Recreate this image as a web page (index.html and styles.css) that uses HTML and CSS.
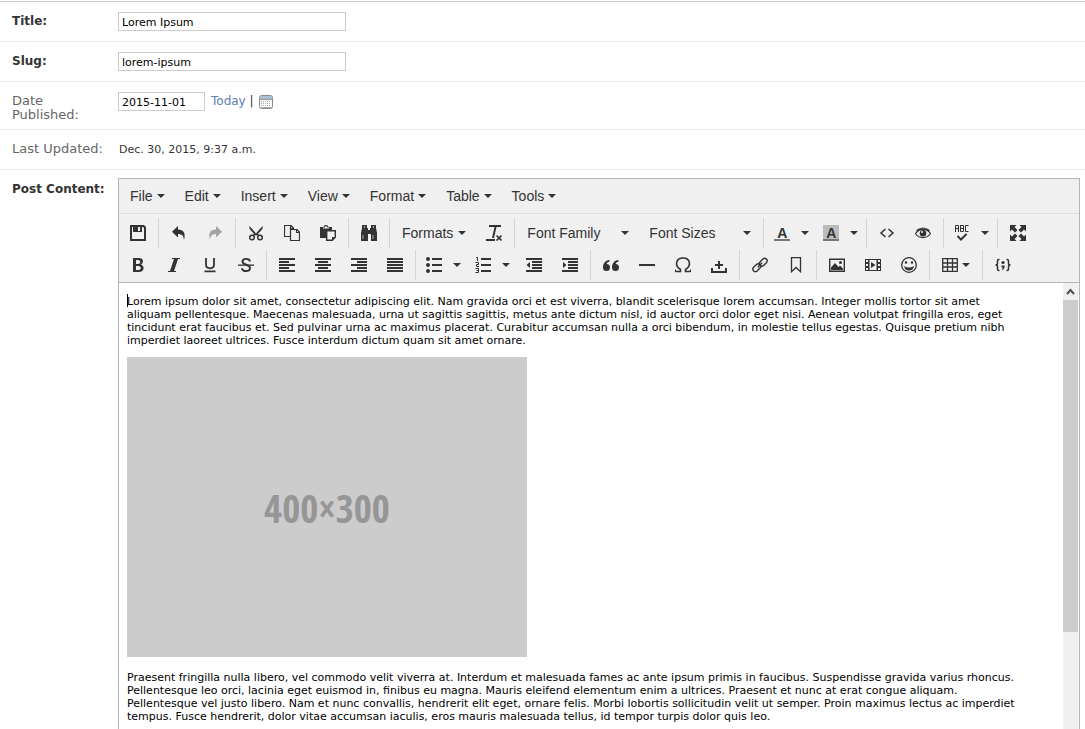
FILE: index.html
```html
<!DOCTYPE html>
<html lang="en">
<head>
<meta charset="utf-8">
<title>Change post</title>
<link rel="stylesheet" href="styles.css">
</head>
<body>
<form class="post-form">
  <div class="row">
    <label class="label required" for="title">Title:</label>
    <input class="text-input wide" id="title" type="text" value="Lorem Ipsum">
  </div>
  <div class="row">
    <label class="label required" for="slug">Slug:</label>
    <input class="text-input wide" id="slug" type="text" value="lorem-ipsum">
  </div>
  <div class="row">
    <label class="label" for="date">Date Published:</label>
    <div class="date-field">
      <input class="text-input date" id="date" type="text" value="2015-11-01">
      <span class="shortcuts"><a href="#today">Today</a> |</span>
      <a class="calendar" href="#calendar" aria-label="Choose a date">
        <svg width="14" height="14" viewBox="0 0 14 14"><rect x=".5" y=".5" width="13" height="13" rx="2" fill="#fff" stroke="#8a8a8a"/><path d="M1 1h12v3H1z" fill="#a9bfd1"/><path d="M1 4.5h12" stroke="#999"/><path d="M2 6.5h10M2 8.5h10M2 10.5h10" stroke="#aaa" stroke-dasharray="1 1"/><path d="M1 12.5h12" stroke="#aaa"/></svg>
      </a>
    </div>
  </div>
  <div class="row">
    <span class="label">Last Updated:</span>
    <p class="readonly">Dec. 30, 2015, 9:37 a.m.</p>
  </div>
  <div class="row editor-row">
    <span class="label required" id="content-label">Post Content:</span>
    <div class="editor">
      <div class="menubar">
        <button type="button">File<i class="caret"></i></button>
        <button type="button">Edit<i class="caret"></i></button>
        <button type="button">Insert<i class="caret"></i></button>
        <button type="button">View<i class="caret"></i></button>
        <button type="button">Format<i class="caret"></i></button>
        <button type="button">Table<i class="caret"></i></button>
        <button type="button">Tools<i class="caret"></i></button>
      </div>
      <div class="toolbars">
        <div class="toolbar">
          <div class="group">
            <button type="button" class="tool" aria-label="Save"><svg class="icon" viewBox="0 0 16 16"><path fill-rule="evenodd" d="M0 0h14l2 2v14H0zM2 2v12h12V3l-1-1h-1v5H3V2zM8 2v4h2V2z"/></svg></button>
          </div>
          <div class="group">
            <button type="button" class="tool" aria-label="Undo"><svg class="icon" viewBox="0 0 16 16"><path d="M7 1v3.500C12.500 4.500 15 8 13 15c-.2-4-2-6-6-6v3.500L1 6.700z"/></svg></button>
            <button type="button" class="tool off" aria-label="Redo"><svg class="icon" viewBox="0 0 16 16"><path d="M9 1v3.500C3.500 4.500 1 8 3 15c.2-4 2-6 6-6v3.500l6-5.800z"/></svg></button>
          </div>
          <div class="group">
            <button type="button" class="tool" aria-label="Cut"><svg class="icon" viewBox="0 0 16 16"><path d="M1.500 1 9 9.500l-1.500 1L2 4.500Q1 3 1.500 1zM14.500 1 7 9.500l1.500 1L14 4.500Q15 3 14.500 1z"/><g fill="none" stroke="currentColor" stroke-width="1.500"><circle cx="4" cy="12.500" r="2.300"/><circle cx="12" cy="12.500" r="2.300"/><path d="M5 10.500q3-2.500 6 0"/></g></svg></button>
            <button type="button" class="tool" aria-label="Copy"><svg class="icon" viewBox="0 0 16 16"><g fill="none" stroke="currentColor" stroke-width="1.200"><path d="M6.500 11.500h-6V.5H7L9.500 3v1.500M6.500.5v3h3"/><path d="M6.500 4.500H13L15.500 7v8.500h-9zM12.500 4.500v3h3"/></g></svg></button>
            <button type="button" class="tool" aria-label="Paste"><svg class="icon" viewBox="0 0 16 16"><path fill-rule="evenodd" d="M0 2h3.500C4 .5 5 0 6 0s2 .5 2.500 2H12v4H6v7H0zM3 3.500h6V2.500H7.300a1.300 1.300 0 0 0-2.600 0H3z"/><path d="M6.700 5.700h8.600v6.600l-3 3H6.700z" fill="#f0f0f0" stroke="currentColor" stroke-width="1.400"/><path d="M15 12h-3v3z"/></svg></button>
          </div>
          <div class="group">
            <button type="button" class="tool" aria-label="Find and replace"><svg class="icon" viewBox="0 0 16 16"><path d="M1 0h5v3h1v2h2V3h1V0h5v3l1 5v8h-6V9H7v7H0V8l1-5z"/><path d="M3.500 1v2M12.500 1v2M2 10v4M12 10v4" stroke="#aaa"/></svg></button>
          </div>
          <div class="group">
            <button type="button" class="text-tool">Formats<i class="caret"></i></button>
            <button type="button" class="tool" aria-label="Clear formatting"><svg class="icon" viewBox="0 0 16 16"><path d="M3 0h12v2h-4.500L8 13H6L8.500 2H3zM0 14h9v2H0z"/><path d="m10.500 10.500 5 5m0-5-5 5" stroke="currentColor" stroke-width="1.600"/></svg></button>
          </div>
          <div class="group">
            <span class="drop"><select aria-label="Font Family"><option>Font Family</option></select><i class="caret"></i></span>
            <span class="drop"><select aria-label="Font Sizes"><option>Font Sizes</option></select><i class="caret"></i></span>
          </div>
          <div class="group">
            <button type="button" class="split" aria-label="Text color"><span class="swatch">A</span><i class="caret"></i></button>
            <button type="button" class="split" aria-label="Background color"><span class="swatch filled">A</span><i class="caret"></i></button>
          </div>
          <div class="group">
            <button type="button" class="tool" aria-label="Source code"><svg class="icon" viewBox="0 0 16 16"><path d="M6.500 4 2 8l4.500 4M9.500 4 14 8l-4.500 4" fill="none" stroke="currentColor" stroke-width="1.500"/></svg></button>
            <button type="button" class="tool" aria-label="Preview"><svg class="icon" viewBox="0 0 16 16"><path d="M.5 8.500C4 3 12 3 15.500 8.500 12 14 4 14 .5 8.500zM1.500 5.500Q8 .5 14.500 5.500" fill="none" stroke="currentColor" stroke-width="1.200"/><circle cx="8" cy="8.300" r="3.300"/><circle cx="7" cy="7" r="1" fill="#f0f0f0"/></svg></button>
          </div>
          <div class="group">
            <button type="button" class="split" aria-label="Spellcheck"><svg class="icon" viewBox="0 0 16 16"><path d="M1.500 7V.5h3V7M1.500 3.500h3M6.500 0v6.500h3V.5h-3M6.500 3.500h3M14.500.5h-3v6h3" fill="none" stroke="currentColor"/><path d="m3.500 11 3.500 3.500L12.500 9" fill="none" stroke="currentColor" stroke-width="2"/></svg><i class="caret"></i></button>
          </div>
          <div class="group">
            <button type="button" class="tool" aria-label="Fullscreen"><svg class="icon" viewBox="0 0 16 16"><path d="M0 0h6.500L4.500 2l3 3L5 7.500l-3-3-2 2zM16 0H9.500l2 2-3 3L11 7.500l3-3 2 2zM0 16h6.500l-2-2 3-3L5 8.500l-3 3-2-2zM16 16H9.500l2-2-3-3L11 8.500l3 3 2-2z"/></svg></button>
          </div>
        </div>
        <div class="toolbar">
          <div class="group">
            <button type="button" class="tool" aria-label="Bold"><svg class="icon" viewBox="0 0 16 16"><path fill-rule="evenodd" d="M3 1h6c5 0 5 5 2 6.500 4 1.500 3.500 7.500-2 7.500H3zM6 3v4h2c3 0 3-4 0-4zM6 9v4h2.500c3 0 3-4 0-4z"/></svg></button>
            <button type="button" class="tool" aria-label="Italic"><svg class="icon" viewBox="0 0 16 16"><path d="M6 1h8v1h-2L8 14h2v1H2v-1h2L8 2H6z"/></svg></button>
            <button type="button" class="tool" aria-label="Underline"><svg class="icon" viewBox="0 0 16 16"><path d="M4 1v6.500c0 5 8 5 8 0V1M2.500 14.300h11" fill="none" stroke="currentColor" stroke-width="1.800"/></svg></button>
            <button type="button" class="tool" aria-label="Strikethrough"><svg class="icon" viewBox="0 0 16 16"><path d="M12 4.500C11.500 1 4.500 1 4.500 4.500c0 4 7.500 2.500 7.500 6.500 0 4-8 4-8 .2" fill="none" stroke="currentColor" stroke-width="1.900"/><path d="M0 7.500h16v1.300H0z"/></svg></button>
          </div>
          <div class="group">
            <button type="button" class="tool" aria-label="Align left"><svg class="icon" viewBox="0 0 16 16"><path d="M0 1h16v2H0zM0 4h10v2H0zM0 7h16v2H0zM0 10h10v2H0zM0 13h16v2H0z"/></svg></button>
            <button type="button" class="tool" aria-label="Align center"><svg class="icon" viewBox="0 0 16 16"><path d="M0 1h16v2H0zM3 4h10v2H3zM0 7h16v2H0zM3 10h10v2H3zM0 13h16v2H0z"/></svg></button>
            <button type="button" class="tool" aria-label="Align right"><svg class="icon" viewBox="0 0 16 16"><path d="M0 1h16v2H0zM6 4h10v2H6zM0 7h16v2H0zM6 10h10v2H6zM0 13h16v2H0z"/></svg></button>
            <button type="button" class="tool" aria-label="Justify"><svg class="icon" viewBox="0 0 16 16"><path d="M0 1h16v2H0zM0 4h16v2H0zM0 7h16v2H0zM0 10h16v2H0zM0 13h16v2H0z"/></svg></button>
          </div>
          <div class="group">
            <button type="button" class="split" aria-label="Bullet list"><svg class="icon" viewBox="0 0 16 16"><circle cx="2" cy="2" r="2"/><circle cx="2" cy="8" r="2"/><circle cx="2" cy="14" r="2"/><path d="M6 1h10v2H6zM6 7h10v2H6zM6 13h10v2H6z"/></svg><i class="caret"></i></button>
            <button type="button" class="split" aria-label="Numbered list"><svg class="icon" viewBox="0 0 16 16"><path d="M6 1h10v2H6zM6 7h10v2H6zM6 13h10v2H6z"/><path d="M1 .5h1.500V4M.5 5.500h3v2h-2v2h2.500M.5 11.500h3v4h-3M1.500 13.500h2" fill="none" stroke="currentColor"/></svg><i class="caret"></i></button>
            <button type="button" class="tool" aria-label="Decrease indent"><svg class="icon" viewBox="0 0 16 16"><path d="M0 1h16v2H0zM6 4h10v2H6zM6 7h10v2H6zM6 10h10v2H6zM0 13h16v2H0zM4 5v6L0.500 8z"/></svg></button>
            <button type="button" class="tool" aria-label="Increase indent"><svg class="icon" viewBox="0 0 16 16"><path d="M0 1h16v2H0zM6 4h10v2H6zM6 7h10v2H6zM6 10h10v2H6zM0 13h16v2H0zM1 5v6l3.500-3z"/></svg></button>
          </div>
          <div class="group">
            <button type="button" class="tool" aria-label="Blockquote"><svg class="icon" viewBox="0 0 16 16"><path d="M3.500 7a3.500 3.500 0 1 1-3.500 3.500C0 6.500 2 3.500 6.500 3v1.500Q4 5 3.500 7z"/><path d="M12.500 7a3.500 3.500 0 1 1-3.500 3.500c0-4 2-7 6.500-7.500v1.500Q13 5 12.500 7z"/></svg></button>
            <button type="button" class="tool" aria-label="Horizontal line"><svg class="icon" viewBox="0 0 16 16"><path d="M0 7h16v2H0z"/></svg></button>
            <button type="button" class="tool" aria-label="Special character"><svg class="icon" viewBox="0 0 16 16"><path d="M.5 14.500h5v-2C-.5 9 .5 1 8 1s8.500 8 2.500 11.500v2h5" fill="none" stroke="currentColor" stroke-width="1.600"/><path d="M0 12.500h1V15H0zM15 12.500h1V15h-1z"/></svg></button>
            <button type="button" class="tool" aria-label="Nonbreaking space"><svg class="icon" viewBox="0 0 16 16"><path d="M7 4h2v3h3v2H9v3H7V9H4V7h3zM0 11h2v3h12v-3h2v5H0z"/></svg></button>
          </div>
          <div class="group">
            <button type="button" class="tool" aria-label="Insert link"><svg class="icon" viewBox="0 0 16 16"><g fill="none" stroke="currentColor" stroke-width="1.400"><rect x="6.700" y="2.800" width="9" height="5" rx="2.500" transform="rotate(-45 11.200 5.300)"/><rect x=".3" y="8.200" width="9" height="5" rx="2.500" transform="rotate(-45 4.800 10.700)"/><path d="m5.800 10.200 4.400-4.400"/></g></svg></button>
            <button type="button" class="tool" aria-label="Anchor"><svg class="icon" viewBox="0 0 16 16"><path d="M3.500.7h9v14L8 10.500l-4.500 4.200z" fill="none" stroke="currentColor" stroke-width="1.300"/></svg></button>
          </div>
          <div class="group">
            <button type="button" class="tool" aria-label="Insert image"><svg class="icon" viewBox="0 0 16 16"><path d="M.7 2.200h14.600v12.100H.7z" fill="none" stroke="currentColor" stroke-width="1.400"/><path d="M2 13V10.500L6 6l3.500 4L11 8.500l3 3V13z"/><circle cx="11.500" cy="5.500" r="1.500"/></svg></button>
            <button type="button" class="tool" aria-label="Insert video"><svg class="icon" viewBox="0 0 16 16"><path fill-rule="evenodd" d="M0 2h16v12H0zM4.500 3v10h7V3zM1 3v2h2V3zm0 4v2h2V7zm0 4v2h2v-2zM13 3v2h2V3zm0 4v2h2V7zm0 4v2h2v-2z"/><path d="M6 5v6l4.500-3z"/></svg></button>
            <button type="button" class="tool" aria-label="Emoticons"><svg class="icon" viewBox="0 0 16 16"><circle cx="8" cy="8" r="7.300" fill="none" stroke="currentColor" stroke-width="1.300"/><circle cx="5" cy="5.500" r="1.200"/><circle cx="11" cy="5.500" r="1.200"/><path d="M3 9q5 3 10 0-1 4.500-5 4.500T3 9z"/></svg></button>
          </div>
          <div class="group">
            <button type="button" class="table-tool" aria-label="Table"><svg class="icon" viewBox="0 0 16 16"><path d="M.7 1.700h14.600v12.600H.7zM.7 6h14.600M.7 10h14.600M5.500 2v12M10.500 2v12" fill="none" stroke="currentColor" stroke-width="1.300"/></svg><i class="caret"></i></button>
          </div>
          <div class="group">
            <button type="button" class="tool" aria-label="Insert template"><svg class="icon" viewBox="0 0 16 16"><path d="M4.500 2.500h-.7Q2.500 2.500 2.500 4v2.500Q2.500 8 .5 8q2 0 2 1.500V12q0 1.500 1.300 1.500h.7M11.500 2.500h.7q1.300 0 1.300 1.500v2.500q0 1.500 2 1.500-2 0-2 1.500V12q0 1.500-1.300 1.500h-.7" fill="none" stroke="currentColor" stroke-width="1.500"/><circle cx="8" cy="5.500" r="1.600"/><path d="M6.400 8.500h3.200c.3 2.500-.6 4-2.600 4.500v-1.200q1.200-.5 1-1.300H6.400z"/></svg></button>
          </div>
        </div>
      </div>
      <div class="edit-area">
        <div class="document" contenteditable="true" role="textbox" aria-multiline="true" aria-labelledby="content-label" spellcheck="false">
          <p><span class="cursor"></span>Lorem ipsum dolor sit amet, consectetur adipiscing elit. Nam gravida orci et est viverra, blandit scelerisque lorem accumsan. Integer mollis tortor sit amet<br>aliquam pellentesque. Maecenas malesuada, urna ut sagittis sagittis, metus ante dictum nisl, id auctor orci dolor eget nisi. Aenean volutpat fringilla eros, eget<br>tincidunt erat faucibus et. Sed pulvinar urna ac maximus placerat. Curabitur accumsan nulla a orci bibendum, in molestie tellus egestas. Quisque pretium nibh<br>imperdiet laoreet ultrices. Fusce interdum dictum quam sit amet ornare.</p>
          <div class="placeholder">400×300</div>
          <p>Praesent fringilla nulla libero, vel commodo velit viverra at. Interdum et malesuada fames ac ante ipsum primis in faucibus. Suspendisse gravida varius rhoncus.<br>Pellentesque leo orci, lacinia eget euismod in, finibus eu magna. Mauris eleifend elementum enim a ultrices. Praesent et nunc at erat congue aliquam.<br>Pellentesque vel justo libero. Nam et nunc convallis, hendrerit elit eget, ornare felis. Morbi lobortis sollicitudin velit ut semper. Proin maximus lectus ac imperdiet<br>tempus. Fusce hendrerit, dolor vitae accumsan iaculis, eros mauris malesuada tellus, id tempor turpis dolor quis leo.</p>
        </div>
        <div class="scrollbar">
          <svg class="scroll-up" width="15" height="17" viewBox="0 0 15 17"><path d="m4 11 3.500-4 3.500 4" fill="none" stroke="#505050" stroke-width="2"/></svg>
          <div class="thumb"></div>
        </div>
      </div>
    </div>
  </div>
</form>
</body>
</html>
```
FILE: styles.css
```css
* { box-sizing: border-box; }
body {
  margin: 0;
  background: #fff;
  color: #333;
  font: 11px/13px Verdana, "DejaVu Sans", sans-serif;
}
.post-form {
  display: flex;
  flex-direction: column;
  height: 100vh;
  overflow: hidden;
  padding-top: 1px;
}
.row {
  display: flex;
  align-items: flex-start;
  padding: 10px 5px 7px 12px;
  border-bottom: 1px solid #eee;
}
.row:first-child { border-top: 1px solid #ccc; }
.label {
  flex: none;
  width: 106px;
  min-height: 22px;
  padding: 2px 10px 0 0;
  color: #666;
  font-size: 13px;
  line-height: 14px;
}
.required {
  color: #333;
  font-size: 12px;
  font-weight: bold;
  white-space: nowrap;
}
.text-input {
  height: 19px;
  padding: 2px 3px 1px;
  border: 1px solid #ccc;
  background: #fff;
  color: #000;
  font: inherit;
}
.wide { width: 228px; }
.date { width: 87px; }
.date-field { display: flex; align-items: center; }
.shortcuts { margin: 0 5px 0 6px; font-size: 12px; }
.shortcuts a { color: #5b80b2; text-decoration: none; }
.calendar { display: flex; }
.readonly { margin: 0; padding: 3px 1px; }

.editor-row {
  flex: 1;
  min-height: 0;
  padding-top: 8px;
  padding-bottom: 0;
  border-bottom: 0;
}
.editor-row > .label { padding-top: 4px; }
.editor {
  display: flex;
  flex: 1;
  flex-direction: column;
  align-self: stretch;
  min-width: 0;
  border: 1px solid #b5b5b5;
  border-bottom: 0;
  background: #f0f0f0;
}
.editor button, .editor select {
  border: 0;
  padding: 0;
  background: none;
  color: #333;
  font: 14px/20px "Liberation Sans", Arial, sans-serif;
}
.editor button { display: flex; align-items: center; height: 30px; }
.menubar {
  display: flex;
  padding: 2px 1px;
  border-bottom: 1px solid #ddd;
}
.menubar button { padding: 0 10px; }
.caret {
  flex: none;
  border: 4px solid transparent;
  border-top-color: #333;
  border-bottom: 0;
}
.menubar .caret { margin-left: 4px; }
.text-tool .caret { margin-left: 5px; }
.toolbars {
  display: flex;
  flex-direction: column;
  gap: 2px;
  padding: 4px 1px 2px;
  border-bottom: 1px solid #b5b5b5;
}
.toolbar, .group { display: flex; }
.group + .group {
  margin-left: 2px;
  padding-left: 2px;
  border-left: 1px solid #d3d3d3;
}
.editor .tool { padding: 0 10px; }
.editor .text-tool { padding: 0 10px; }
.off { opacity: .4; }
.icon { flex: none; width: 16px; height: 16px; fill: currentColor; color: #333; }
.editor .split { width: 49px; padding-left: 8px; gap: 11px; }
.editor .table-tool { width: 48px; padding-left: 10px; gap: 4px; }
.swatch {
  width: 16px;
  height: 16px;
  border-bottom: 2px solid #777;
  font-weight: bold;
  line-height: 16px;
  text-align: center;
}
.filled { background: #bbb; }
.drop { display: grid; width: 122px; align-items: center; }
.drop > * { grid-area: 1 / 1; }
.drop select { appearance: none; height: 30px; padding: 0 26px 0 10px; }
.drop .caret { justify-self: end; margin-right: 10px; pointer-events: none; }

.edit-area {
  display: flex;
  flex: 1;
  min-height: 0;
  background: #fff;
}
.document {
  position: relative;
  flex: 1;
  min-width: 0;
  padding: 12px 8px;
  overflow: hidden;
  color: #000;
  white-space: nowrap;
}
.document p { margin: 0; }
.cursor {
  position: absolute;
  left: 8px;
  top: 11px;
  width: 1px;
  height: 13px;
  background: #000;
}
.placeholder {
  display: flex;
  align-items: center;
  justify-content: center;
  width: 400px;
  height: 300px;
  margin: 10px 0 14px;
  background: #ccc;
  color: #969696;
  font: bold 39px "Liberation Sans Narrow", "Open Sans Condensed", "Roboto Condensed", "DejaVu Sans Condensed", sans-serif;
}
.scrollbar { flex: none; width: 16px; background: #f0f0f0; border-right: 1px solid #f8f8f8; }
.scroll-up { display: block; }
.thumb { height: 332px; background: #cdcdcd; }
```
